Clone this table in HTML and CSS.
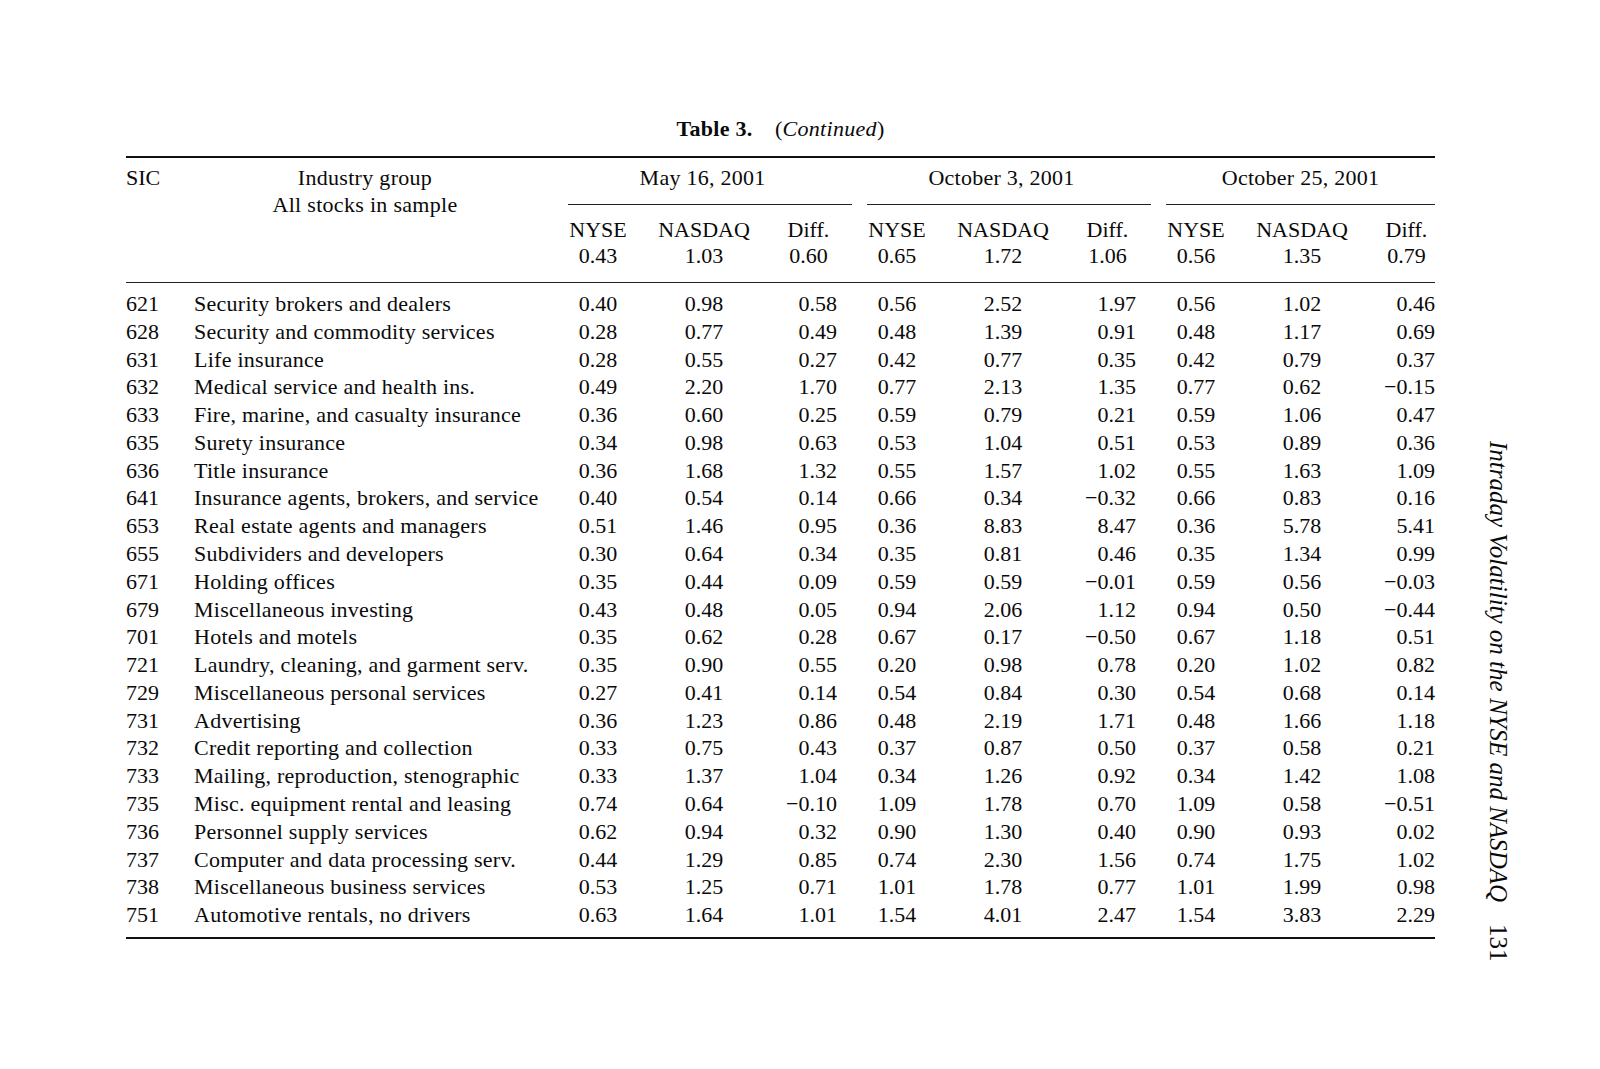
FILE: index.html
```html
<!DOCTYPE html>
<html lang="en">
<head>
<meta charset="utf-8">
<title>Table 3. (Continued)</title>
<link rel="stylesheet" href="styles.css">
</head>
<body>
<div class="page">
  <div class="main">
    <div class="title"><b>Table 3.</b>&emsp;(<i>Continued</i>)</div>
    <div class="table">
      <div class="thead">
        <div class="h-sic">SIC</div>
        <div class="h-ind">Industry group<br>All stocks in sample</div>
        <div class="h-grp gap-after">May 16, 2001</div>
        <div class="h-grp gap-after">October 3, 2001</div>
        <div class="h-grp">October 25, 2001</div>

        <div class="h-sub">NYSE</div>
        <div class="h-sub">NASDAQ</div>
        <div class="h-sub gap-pad">Diff.</div>
        <div class="h-sub">NYSE</div>
        <div class="h-sub">NASDAQ</div>
        <div class="h-sub gap-pad">Diff.</div>
        <div class="h-sub">NYSE</div>
        <div class="h-sub">NASDAQ</div>
        <div class="h-sub">Diff.</div>

        <div class="h-val">0.43</div>
        <div class="h-val">1.03</div>
        <div class="h-val gap-pad">0.60</div>
        <div class="h-val">0.65</div>
        <div class="h-val">1.72</div>
        <div class="h-val gap-pad">1.06</div>
        <div class="h-val">0.56</div>
        <div class="h-val">1.35</div>
        <div class="h-val">0.79</div>
      </div>
      <div class="tbody">
        <div class="row"><span class="sic">621</span><span class="ind">Security brokers and dealers</span><span class="n">0.40</span><span class="n">0.98</span><span class="d gap-pad">0.58</span><span class="n">0.56</span><span class="n">2.52</span><span class="d gap-pad">1.97</span><span class="n">0.56</span><span class="n">1.02</span><span class="d">0.46</span></div>
        <div class="row"><span class="sic">628</span><span class="ind">Security and commodity services</span><span class="n">0.28</span><span class="n">0.77</span><span class="d gap-pad">0.49</span><span class="n">0.48</span><span class="n">1.39</span><span class="d gap-pad">0.91</span><span class="n">0.48</span><span class="n">1.17</span><span class="d">0.69</span></div>
        <div class="row"><span class="sic">631</span><span class="ind">Life insurance</span><span class="n">0.28</span><span class="n">0.55</span><span class="d gap-pad">0.27</span><span class="n">0.42</span><span class="n">0.77</span><span class="d gap-pad">0.35</span><span class="n">0.42</span><span class="n">0.79</span><span class="d">0.37</span></div>
        <div class="row"><span class="sic">632</span><span class="ind">Medical service and health ins.</span><span class="n">0.49</span><span class="n">2.20</span><span class="d gap-pad">1.70</span><span class="n">0.77</span><span class="n">2.13</span><span class="d gap-pad">1.35</span><span class="n">0.77</span><span class="n">0.62</span><span class="d">&minus;0.15</span></div>
        <div class="row"><span class="sic">633</span><span class="ind">Fire, marine, and casualty insurance</span><span class="n">0.36</span><span class="n">0.60</span><span class="d gap-pad">0.25</span><span class="n">0.59</span><span class="n">0.79</span><span class="d gap-pad">0.21</span><span class="n">0.59</span><span class="n">1.06</span><span class="d">0.47</span></div>
        <div class="row"><span class="sic">635</span><span class="ind">Surety insurance</span><span class="n">0.34</span><span class="n">0.98</span><span class="d gap-pad">0.63</span><span class="n">0.53</span><span class="n">1.04</span><span class="d gap-pad">0.51</span><span class="n">0.53</span><span class="n">0.89</span><span class="d">0.36</span></div>
        <div class="row"><span class="sic">636</span><span class="ind">Title insurance</span><span class="n">0.36</span><span class="n">1.68</span><span class="d gap-pad">1.32</span><span class="n">0.55</span><span class="n">1.57</span><span class="d gap-pad">1.02</span><span class="n">0.55</span><span class="n">1.63</span><span class="d">1.09</span></div>
        <div class="row"><span class="sic">641</span><span class="ind">Insurance agents, brokers, and service</span><span class="n">0.40</span><span class="n">0.54</span><span class="d gap-pad">0.14</span><span class="n">0.66</span><span class="n">0.34</span><span class="d gap-pad">&minus;0.32</span><span class="n">0.66</span><span class="n">0.83</span><span class="d">0.16</span></div>
        <div class="row"><span class="sic">653</span><span class="ind">Real estate agents and managers</span><span class="n">0.51</span><span class="n">1.46</span><span class="d gap-pad">0.95</span><span class="n">0.36</span><span class="n">8.83</span><span class="d gap-pad">8.47</span><span class="n">0.36</span><span class="n">5.78</span><span class="d">5.41</span></div>
        <div class="row"><span class="sic">655</span><span class="ind">Subdividers and developers</span><span class="n">0.30</span><span class="n">0.64</span><span class="d gap-pad">0.34</span><span class="n">0.35</span><span class="n">0.81</span><span class="d gap-pad">0.46</span><span class="n">0.35</span><span class="n">1.34</span><span class="d">0.99</span></div>
        <div class="row"><span class="sic">671</span><span class="ind">Holding offices</span><span class="n">0.35</span><span class="n">0.44</span><span class="d gap-pad">0.09</span><span class="n">0.59</span><span class="n">0.59</span><span class="d gap-pad">&minus;0.01</span><span class="n">0.59</span><span class="n">0.56</span><span class="d">&minus;0.03</span></div>
        <div class="row"><span class="sic">679</span><span class="ind">Miscellaneous investing</span><span class="n">0.43</span><span class="n">0.48</span><span class="d gap-pad">0.05</span><span class="n">0.94</span><span class="n">2.06</span><span class="d gap-pad">1.12</span><span class="n">0.94</span><span class="n">0.50</span><span class="d">&minus;0.44</span></div>
        <div class="row"><span class="sic">701</span><span class="ind">Hotels and motels</span><span class="n">0.35</span><span class="n">0.62</span><span class="d gap-pad">0.28</span><span class="n">0.67</span><span class="n">0.17</span><span class="d gap-pad">&minus;0.50</span><span class="n">0.67</span><span class="n">1.18</span><span class="d">0.51</span></div>
        <div class="row"><span class="sic">721</span><span class="ind">Laundry, cleaning, and garment serv.</span><span class="n">0.35</span><span class="n">0.90</span><span class="d gap-pad">0.55</span><span class="n">0.20</span><span class="n">0.98</span><span class="d gap-pad">0.78</span><span class="n">0.20</span><span class="n">1.02</span><span class="d">0.82</span></div>
        <div class="row"><span class="sic">729</span><span class="ind">Miscellaneous personal services</span><span class="n">0.27</span><span class="n">0.41</span><span class="d gap-pad">0.14</span><span class="n">0.54</span><span class="n">0.84</span><span class="d gap-pad">0.30</span><span class="n">0.54</span><span class="n">0.68</span><span class="d">0.14</span></div>
        <div class="row"><span class="sic">731</span><span class="ind">Advertising</span><span class="n">0.36</span><span class="n">1.23</span><span class="d gap-pad">0.86</span><span class="n">0.48</span><span class="n">2.19</span><span class="d gap-pad">1.71</span><span class="n">0.48</span><span class="n">1.66</span><span class="d">1.18</span></div>
        <div class="row"><span class="sic">732</span><span class="ind">Credit reporting and collection</span><span class="n">0.33</span><span class="n">0.75</span><span class="d gap-pad">0.43</span><span class="n">0.37</span><span class="n">0.87</span><span class="d gap-pad">0.50</span><span class="n">0.37</span><span class="n">0.58</span><span class="d">0.21</span></div>
        <div class="row"><span class="sic">733</span><span class="ind">Mailing, reproduction, stenographic</span><span class="n">0.33</span><span class="n">1.37</span><span class="d gap-pad">1.04</span><span class="n">0.34</span><span class="n">1.26</span><span class="d gap-pad">0.92</span><span class="n">0.34</span><span class="n">1.42</span><span class="d">1.08</span></div>
        <div class="row"><span class="sic">735</span><span class="ind">Misc. equipment rental and leasing</span><span class="n">0.74</span><span class="n">0.64</span><span class="d gap-pad">&minus;0.10</span><span class="n">1.09</span><span class="n">1.78</span><span class="d gap-pad">0.70</span><span class="n">1.09</span><span class="n">0.58</span><span class="d">&minus;0.51</span></div>
        <div class="row"><span class="sic">736</span><span class="ind">Personnel supply services</span><span class="n">0.62</span><span class="n">0.94</span><span class="d gap-pad">0.32</span><span class="n">0.90</span><span class="n">1.30</span><span class="d gap-pad">0.40</span><span class="n">0.90</span><span class="n">0.93</span><span class="d">0.02</span></div>
        <div class="row"><span class="sic">737</span><span class="ind">Computer and data processing serv.</span><span class="n">0.44</span><span class="n">1.29</span><span class="d gap-pad">0.85</span><span class="n">0.74</span><span class="n">2.30</span><span class="d gap-pad">1.56</span><span class="n">0.74</span><span class="n">1.75</span><span class="d">1.02</span></div>
        <div class="row"><span class="sic">738</span><span class="ind">Miscellaneous business services</span><span class="n">0.53</span><span class="n">1.25</span><span class="d gap-pad">0.71</span><span class="n">1.01</span><span class="n">1.78</span><span class="d gap-pad">0.77</span><span class="n">1.01</span><span class="n">1.99</span><span class="d">0.98</span></div>
        <div class="row"><span class="sic">751</span><span class="ind">Automotive rentals, no drivers</span><span class="n">0.63</span><span class="n">1.64</span><span class="d gap-pad">1.01</span><span class="n">1.54</span><span class="n">4.01</span><span class="d gap-pad">2.47</span><span class="n">1.54</span><span class="n">3.83</span><span class="d">2.29</span></div>
      </div>
    </div>
  </div>
  <div class="runhead"><i>Intraday Volatility on the NYSE and NASDAQ</i><span class="folio">131</span></div>
</div>
</body>
</html>
```

FILE: styles.css
```css
html, body {
  margin: 0;
  padding: 0;
  background: #ffffff;
}

body {
  font-family: "Liberation Serif", "Times New Roman", serif;
  font-size: 22px;
  color: #0a0a0a;
}

.page {
  display: flex;
  align-items: flex-start;
  padding-left: 126px;
}

.main {
  width: 1309px;
  padding-top: 115px;
}

.title {
  text-align: center;
  line-height: 28px;
  margin-bottom: 13px;
  letter-spacing: 0.3px;
}

.title b {
  font-weight: bold;
}

.table {
  border-top: 2px solid #111111;
  border-bottom: 2px solid #111111;
}

.thead,
.row {
  display: grid;
  grid-template-columns: 68px 374px 60px 152px 87px 60px 152px 87px 60px 152px 57px;
}

.thead {
  padding-top: 5.6px;
  padding-bottom: 12px;
}

.h-sic {
  grid-row: span 3;
  line-height: 27.8px;
}

.h-ind {
  grid-row: span 3;
  line-height: 27.8px;
  text-align: center;
  padding-right: 32px;
  letter-spacing: 0.3px;
}

.h-grp {
  grid-column: span 3;
  line-height: 27.8px;
  text-align: center;
  padding-bottom: 12.6px;
  border-bottom: 1px solid #222222;
  align-self: start;
  letter-spacing: 0.25px;
}

.h-grp.gap-after {
  margin-right: 15px;
  padding-right: 15px;
}

.h-sub {
  line-height: 26.5px;
  padding-top: 12px;
  text-align: center;
}

.h-val {
  line-height: 26.5px;
  text-align: center;
}

.gap-pad {
  padding-right: 30px;
}

.tbody {
  border-top: 1px solid #222222;
  padding-top: 7px;
  padding-bottom: 8px;
}

.row {
  line-height: 27.78px;
}

.ind {
  letter-spacing: 0.26px;
}

.n {
  text-align: center;
}

.d {
  text-align: right;
}

.runhead {
  writing-mode: vertical-rl;
  font-size: 25px;
  line-height: 25px;
  margin-top: 441px;
  margin-left: 51px;
  white-space: nowrap;
}

.folio {
  margin-top: 22px;
}
```
